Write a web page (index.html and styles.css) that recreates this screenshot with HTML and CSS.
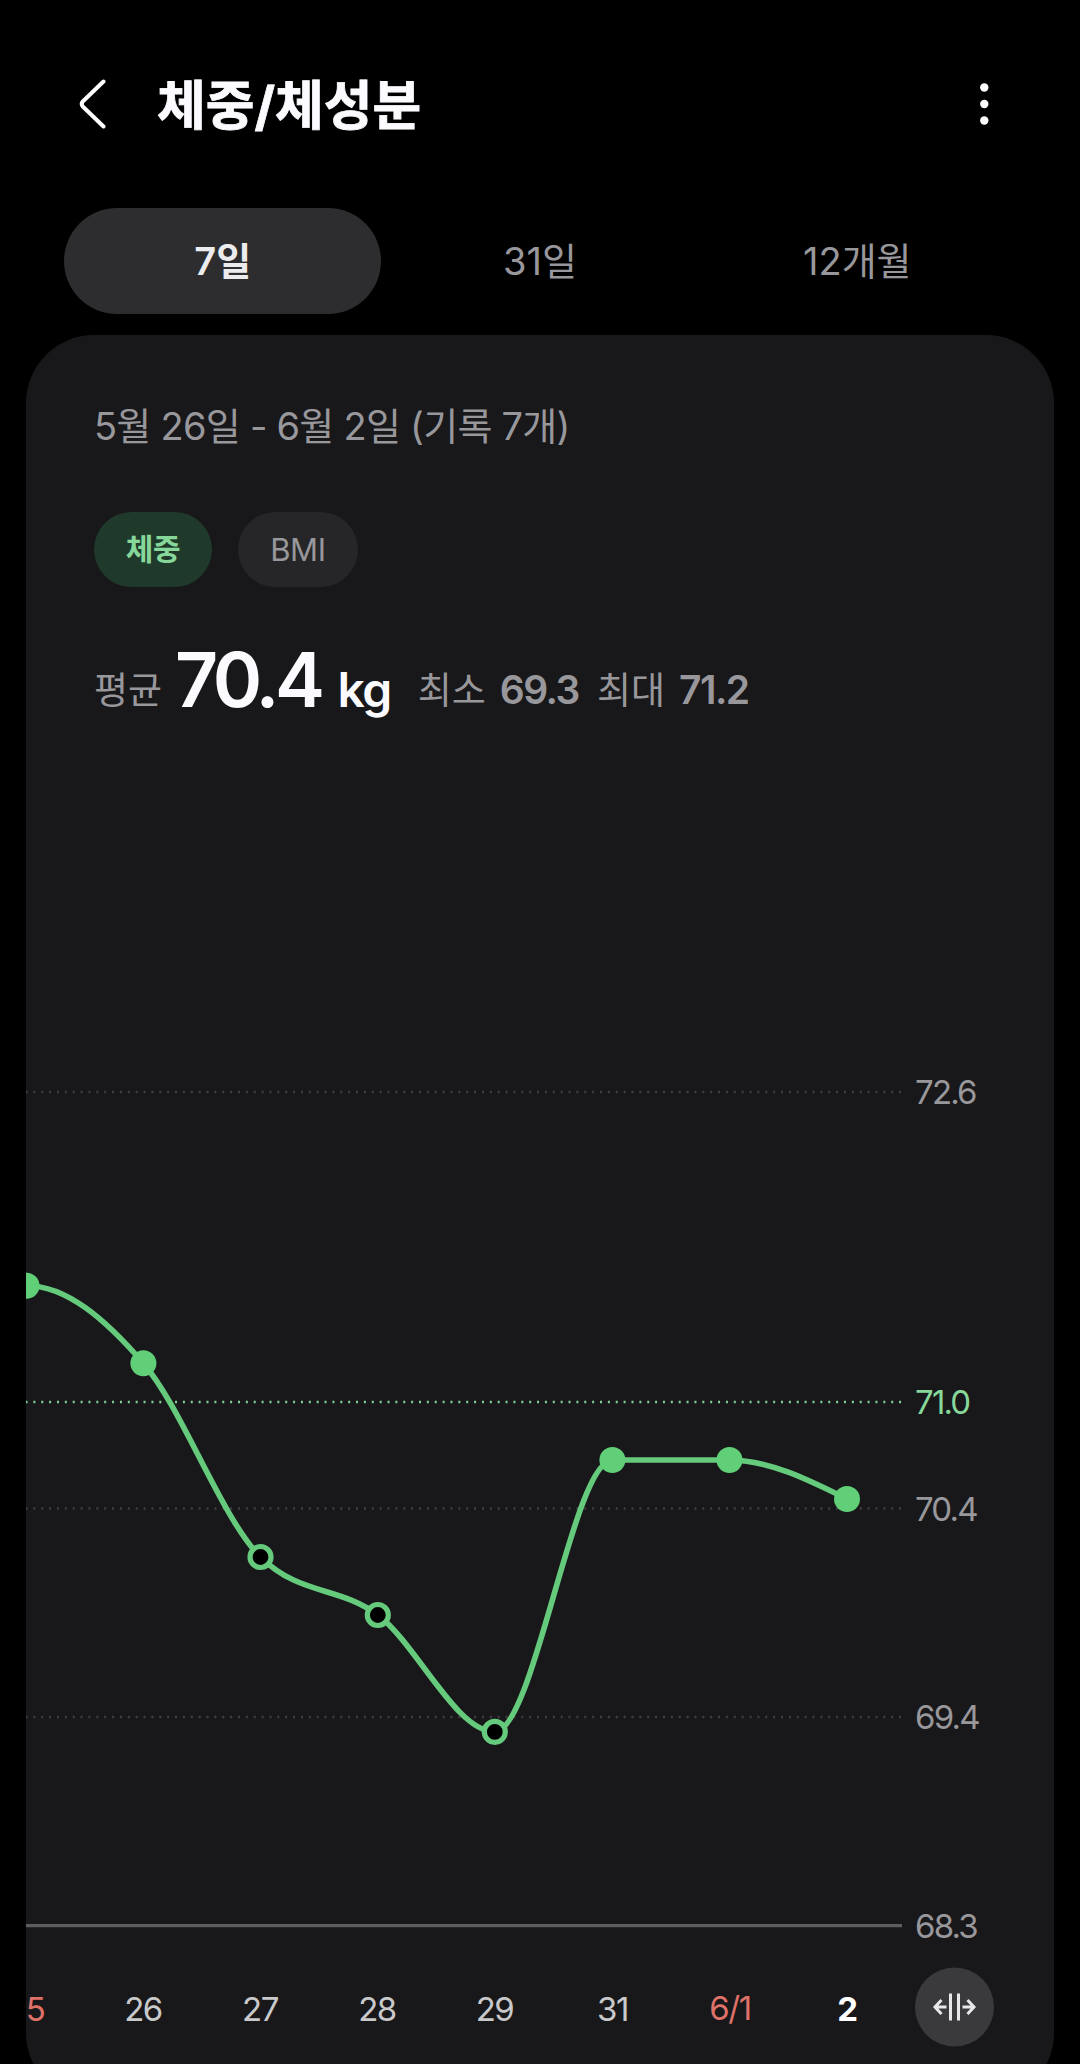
FILE: index.html
```html
<!DOCTYPE html>
<html lang="ko">
<head>
    <meta charset="UTF-8">
    <meta name="viewport" content="width=device-width, initial-scale=1.0">
    <title>체중/체성분</title>
    <link rel="stylesheet" href="styles.css">
</head>
<body>
    <header class="header">
        <svg class="back" width="30" height="54" viewBox="0 0 30 54">
            <path d="M25.5 4.5 L5 24.2 Q2.5 27 5 29.8 L25.5 49.5"/>
        </svg>
        <h1>체중/체성분</h1>
        <svg class="more" width="12" height="44" viewBox="0 0 12 44">
            <circle cx="6.3" cy="5.5" r="4.2"/>
            <circle cx="6.3" cy="22" r="4.2"/>
            <circle cx="6.3" cy="38.5" r="4.2"/>
        </svg>
    </header>

    <nav class="tabs">
        <div class="tab active">7일</div>
        <div class="tab">31일</div>
        <div class="tab">12개월</div>
    </nav>

    <main class="card">
        <div class="period">5월 26일 - 6월 2일 (기록 7개)</div>
        <div class="chips">
            <div class="chip active">체중</div>
            <div class="chip">BMI</div>
        </div>
        <div class="summary">
            <span class="label">평균</span>
            <span class="average">70.4</span>
            <span class="unit">kg</span>
            <span class="label min">최소</span>
            <span class="value">69.3</span>
            <span class="label max">최대</span>
            <span class="value">71.2</span>
        </div>

        <svg class="chart" width="1028" height="1044" viewBox="26 1020 1028 1044">
            <g class="grid">
                <path d="M25.5 1092H902"/>
                <path class="target" d="M25.5 1402H902"/>
                <path d="M25.5 1508.5H902"/>
                <path d="M25.5 1717H902"/>
            </g>
            <path class="baseline" d="M26 1925.7H902"/>

            <path class="line" d="M27 1285.7 C66 1285.7 104.4 1318.1 143.4 1363.3 C182.4 1408.5 221.5 1518.4 260.5 1557 C299.5 1595.6 338.8 1585.9 377.8 1615 C416.8 1644.1 455.8 1731.8 494.8 1731.8 C534 1731.8 573.2 1460 612.4 1460 L729.5 1460 C768.6 1460 808 1479.5 847 1499"/>
            <g class="points">
                <circle cx="26.5" cy="1285.7" r="13"/>
                <circle cx="143.4" cy="1363.3" r="13"/>
                <circle class="open" cx="260.5" cy="1557" r="10.5"/>
                <circle class="open" cx="377.8" cy="1615" r="10.5"/>
                <circle class="open" cx="494.8" cy="1731.8" r="10.5"/>
                <circle cx="612.4" cy="1460" r="13"/>
                <circle cx="729.5" cy="1460" r="13"/>
                <circle cx="847" cy="1499" r="13"/>
            </g>

            <g class="y-labels">
                <text x="915" y="1104">72.6</text>
                <text class="target" x="915" y="1414">71.0</text>
                <text x="915" y="1521">70.4</text>
                <text x="915" y="1729">69.4</text>
                <text x="915" y="1938">68.3</text>
            </g>
            <g class="x-labels">
                <text class="holiday" x="35" y="2021">5</text>
                <text x="143" y="2021">26</text>
                <text x="260" y="2021">27</text>
                <text x="377" y="2021">28</text>
                <text x="494.5" y="2021">29</text>
                <text x="612.5" y="2021">31</text>
                <text class="holiday" x="730" y="2020">6/1</text>
                <text class="today" x="847" y="2021">2</text>
            </g>

            <!-- zoom toggle -->
            <circle class="toggle" cx="954.5" cy="2007" r="39.5"/>
            <g class="toggle-icon">
                <path d="M950.5 1993.5V2020.5M958.5 1993.5V2020.5"/>
                <path d="M946.5 2007H935.5M941.5 2000L935 2007L941.5 2014"/>
                <path d="M962.5 2007H973.5M967.5 2000L974 2007L967.5 2014"/>
            </g>
        </svg>
    </main>
</body>
</html>
```
FILE: styles.css
```css
* {
    box-sizing: border-box;
}
body {
    margin: 0;
    height: 2064px;
    overflow: hidden;
    background: #000;
    color: #fbfaff;
    font-family: Inter, "Noto Sans CJK KR", sans-serif;
}
.header {
    display: flex;
    align-items: center;
    height: 208px;
    padding: 0 90px 0 78px;
}
.back {
    fill: none;
    stroke: #fff;
    stroke-width: 4;
    stroke-linecap: round;
    stroke-linejoin: round;
}
h1 {
    flex: 1;
    margin: 0 0 0 49px;
    padding-top: 3px;
    font-size: 53px;
    line-height: 60px;
    font-weight: 700;
    -webkit-text-stroke: 0.8px #fbfaff;
}
.more {
    fill: #fff;
}
.tabs {
    display: flex;
    height: 106px;
    padding: 0 64px;
}
.tab {
    flex: 1;
    border-radius: 53px;
    text-align: center;
    font-size: 38px;
    line-height: 106px;
    color: #98979b;
}
.tab.active {
    background: #2d2d2f;
    color: #ececee;
    font-weight: 600;
}
.card {
    height: 1766px;
    margin: 21px 26px 0;
    padding-top: 66px;
    border-radius: 68px;
    background: #18181a;
    overflow: hidden;
}
.period {
    padding-left: 68px;
    font-size: 38px;
    line-height: 50px;
    letter-spacing: -0.75px;
    color: #98979b;
}
.chips {
    display: flex;
    gap: 26px;
    margin: 61px 0 0 68px;
}
.chip {
    width: 120px;
    height: 75px;
    border-radius: 38px;
    background: #262628;
    color: #98979b;
    font-size: 31px;
    line-height: 75px;
    letter-spacing: -0.3px;
    text-align: center;
}
.chip.active {
    width: 118px;
    background: #1f3a2b;
    color: #87d79b;
    font-size: 30px;
    font-weight: 700;
}
.summary {
    display: flex;
    align-items: baseline;
    height: 100px;
    margin-top: 43px;
    padding-left: 68px;
    line-height: 100px;
    white-space: nowrap;
    color: #98979b;
}
.label {
    font-size: 37px;
}
.label,
.value {
    transform: translateY(-3px);
}
.average {
    margin-left: 13px;
    color: #fbfaff;
    font-size: 75px;
    font-weight: 600;
    letter-spacing: -4.5px;
}
.unit {
    margin-left: 17px;
    color: #fbfaff;
    font-size: 48px;
    font-weight: 600;
    letter-spacing: -1.5px;
}
.min {
    margin-left: 27px;
}
.max {
    margin-left: 18px;
}
.value {
    margin-left: 14px;
    font-size: 39px;
    font-weight: 600;
    letter-spacing: -1.5px;
}
.chart {
    display: block;
    margin-top: 290px;
}
.grid path {
    stroke: #3f3f42;
    stroke-width: 2.4;
    stroke-dasharray: 2 5.87;
}
.grid .target {
    stroke: #80cf96;
}
.baseline {
    stroke: #5d5d60;
    stroke-width: 3.2;
}
.line {
    fill: none;
    stroke: #65ca7c;
    stroke-width: 5.6;
}
.points circle {
    fill: #60cf78;
}
.points .open {
    fill: #000;
    stroke: #65ca7c;
    stroke-width: 5.2;
}
.y-labels {
    fill: #98979b;
    font-size: 33px;
    letter-spacing: -1.8px;
}
.y-labels .target {
    fill: #87d79b;
}
.x-labels {
    fill: #c9c9cb;
    font-size: 33px;
    letter-spacing: -1.5px;
    text-anchor: middle;
}
.x-labels .holiday {
    fill: #de7168;
}
.x-labels .today {
    fill: #fff;
    font-weight: 700;
}
.toggle {
    fill: #3a3a3c;
}
.toggle-icon {
    fill: none;
    stroke: #e8e8ea;
    stroke-width: 3;
}
```
